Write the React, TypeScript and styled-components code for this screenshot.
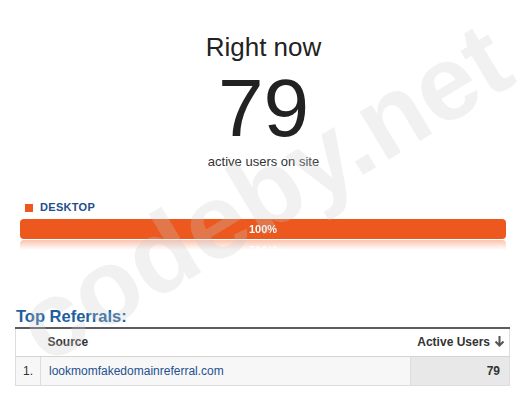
import React from "react";
import styled, { createGlobalStyle } from "styled-components";

interface referral {
  source: string;
  users: number;
}

const referrals: referral[] = [
  { source: "lookmomfakedomainreferral.com", users: 79 },
];

const GlobalStyle = createGlobalStyle`
  html, body {
    margin: 0;
    padding: 0;
    background: #fff;
  }
  body {
    font-family: "Liberation Sans", Arial, sans-serif;
    color: #222;
  }
`;

const Page = styled.div`
  position: relative;
  overflow: hidden;
  min-height: 400px;
  padding: 32px 13px 0 15px;
  box-sizing: border-box;
`;

const Counter = styled.div`
  display: flex;
  flex-direction: column;
  align-items: center;
  padding-left: 2px;
`;

const Title = styled.div`
  font-size: 26px;
  line-height: 30px;
  color: #222;
`;

const BigNumber = styled.div`
  margin-top: 5px;
  font-size: 82px;
  line-height: 82px;
  color: #222;
`;

const Caption = styled.div`
  margin-top: 5px;
  font-size: 13px;
  line-height: 16px;
  color: #333;
`;

const DeviceBlock = styled.div`
  margin: 31px 4px 0 5px;
`;

const Legend = styled.div`
  display: flex;
  align-items: center;
  gap: 7px;
  padding-left: 5px;
  font-size: 11px;
  line-height: 13px;
  font-weight: bold;
  letter-spacing: 0.3px;
  color: #1f4d8d;
`;

const Swatch = styled.span<{ $color: string }>`
  width: 8px;
  height: 8px;
  background: ${(p) => p.$color};
`;

const Bar = styled.div<{ $color: string }>`
  margin-top: 5px;
  height: 20px;
  line-height: 20px;
  border-radius: 4px;
  background: ${(p) => p.$color};
  color: #fff;
  font-size: 11px;
  font-weight: bold;
  text-align: center;
  text-shadow: 0 0 1px rgba(0, 0, 0, 0.2);
  -webkit-box-reflect: below 1px
    linear-gradient(transparent 50%, rgba(255, 255, 255, 0.35));
`;

const Segment = styled.div`
  height: 100%;
`;

const SectionTitle = styled.div`
  margin-top: 67px;
  font-size: 16.5px;
  line-height: 20px;
  font-weight: bold;
  color: #1e5f9f;
  padding-left: 1px;
`;

const Table = styled.table`
  margin-top: 1px;
  width: 495px;
  border-collapse: collapse;
  border-top: 2px solid #5c5c5c;
  font-size: 12px;
  line-height: 15px;
`;

const HeadCell = styled.th<{ $align?: string }>`
  padding: 6px 4px 6px 7px;
  text-align: ${(p) => p.$align || "left"};
  font-weight: bold;
  color: #333;
  background: #fff;
  border-bottom: 1px solid #d4d4d4;
  white-space: nowrap;
  &:first-child {
    border-left: 1px solid #ddd;
  }
  &:last-child {
    border-right: 1px solid #ddd;
  }
`;

const Row = styled.tr`
  background: #f7f7f7;
  border-bottom: 1px solid #ddd;
`;

const IndexCell = styled.td`
  width: 24px;
  padding: 7px 0 6px;
  text-align: center;
  color: #333;
  border-left: 1px solid #ddd;
  border-right: 1px solid #ddd;
`;

const SourceCell = styled.td`
  padding: 7px 8px 6px;
  color: #24508f;
`;

const ValueCell = styled.td`
  width: 88px;
  padding: 7px 9px 6px 0;
  text-align: right;
  font-weight: bold;
  color: #333;
  background: #e8e8e8;
  border-left: 1px solid #ddd;
  border-right: 1px solid #ddd;
`;

const SortIcon = styled.svg`
  margin-left: 4px;
  vertical-align: -1px;
`;

const Watermark = styled.div`
  position: absolute;
  left: 263px;
  top: 192px;
  transform: translate(-50%, -50%) rotate(-31deg);
  font-family: "Liberation Sans", Arial, sans-serif;
  font-weight: bold;
  font-size: 106px;
  line-height: 1;
  color: rgba(205, 205, 205, 0.27);
  white-space: nowrap;
  pointer-events: none;
`;

const App: React.FunctionComponent<{}> = () => {
  const rows = referrals.map((d: referral, i: number) => {
    return (
      <Row key={i}>
        <IndexCell>{i + 1}.</IndexCell>
        <SourceCell>{d.source}</SourceCell>
        <ValueCell>{d.users}</ValueCell>
      </Row>
    );
  });
  return (
    <Page>
      <GlobalStyle />
      <Counter>
        <Title>Right now</Title>
        <BigNumber>79</BigNumber>
        <Caption>active users on site</Caption>
      </Counter>
      <DeviceBlock>
        <Legend>
          <Swatch $color="#ec581d" />
          DESKTOP
        </Legend>
        <Bar $color="#ec581d">
          <Segment>100%</Segment>
        </Bar>
      </DeviceBlock>
      <SectionTitle>Top Referrals:</SectionTitle>
      <Table>
        <thead>
          <tr>
            <HeadCell />
            <HeadCell>Source</HeadCell>
            <HeadCell $align="right">
              Active Users
              <SortIcon width="11" height="12" viewBox="0 0 11 12">
                <path
                  d="M5.5 1v9.5M1.5 6.5l4 4 4-4"
                  fill="none"
                  stroke="#555"
                  strokeWidth="2"
                />
              </SortIcon>
            </HeadCell>
          </tr>
        </thead>
        <tbody>{rows}</tbody>
      </Table>
      <Watermark>codeby.net</Watermark>
    </Page>
  );
};

export default App;
